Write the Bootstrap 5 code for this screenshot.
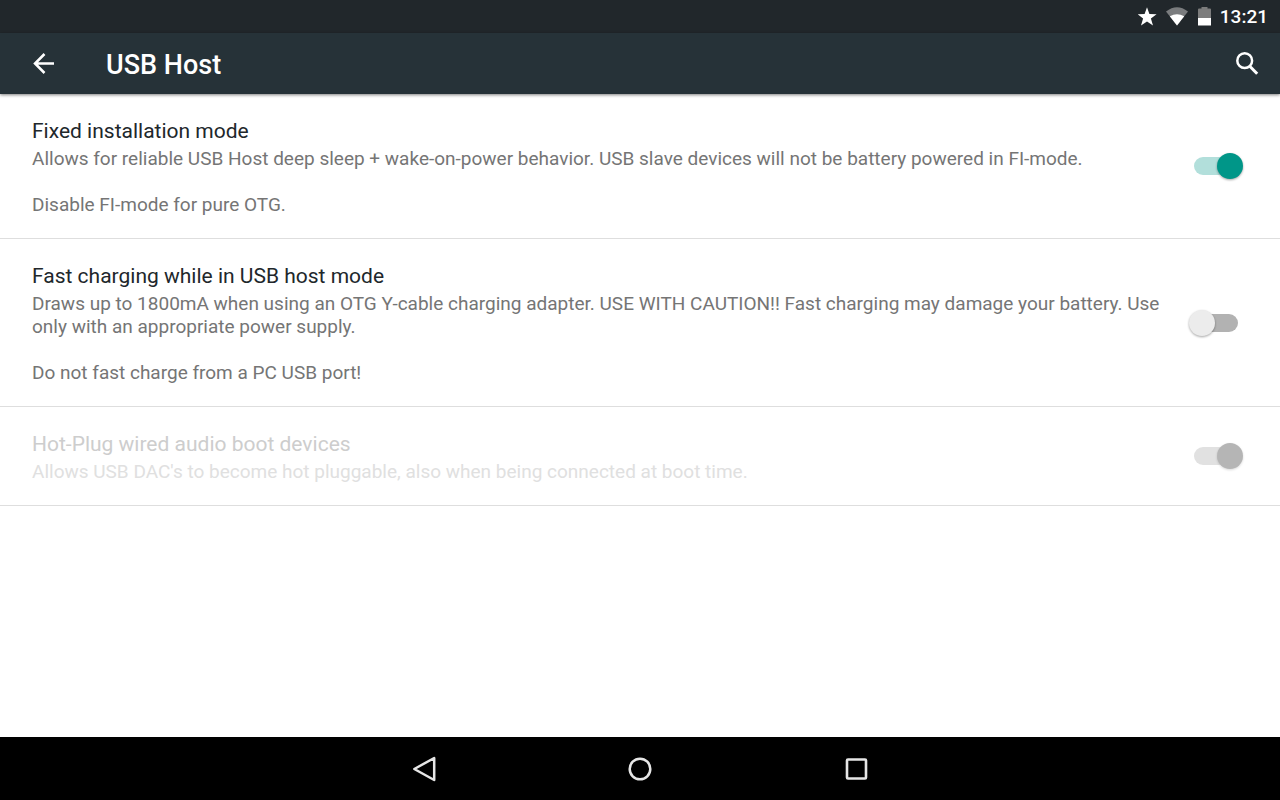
<!DOCTYPE html>
<html lang="en">
<head>
<meta charset="utf-8">
<meta name="viewport" content="width=device-width, initial-scale=1">
<title>USB Host</title>
<link href="https://cdn.jsdelivr.net/npm/bootstrap@5.3.0/dist/css/bootstrap.min.css" rel="stylesheet">
<style>
  body { font-family: Roboto, "Liberation Sans", sans-serif; background: #fff; color: #21272b; }
  svg { display: block; }
  .status-strip { height: 33px; padding-right: 12px; background: #21272b; color: #fff; font-size: 19px; line-height: 33px; font-weight: 500; }
  .app-bar { height: 61px; padding: 0 16px 0 26px; background: #263238; color: #fff; box-shadow: 0 1px 3px rgba(0,0,0,.5); position: relative; }
  .app-title { margin: 2px 0 0 46px; font-size: 27px; line-height: 32px; font-weight: 500; }
  .icon-btn { padding: 0; border: 0; color: inherit; }
  .pref { padding: 22px 36px 22px 32px; border-bottom: 1px solid #dedede; gap: 24px; }
  .pref-title { font-size: 21px; line-height: 30px; font-weight: 400; margin: 0 0 1px; display: block; }
  .pref-text { font-size: 19px; line-height: 23px; color: #757575; margin: 0; }
  .pref-text + .pref-text { margin-top: 23px; }
  .pref-off .pref-title { color: #cdcdcd; }
  .pref-off .pref-text { color: #e0e0e0; }
  .toggle { appearance: none; position: relative; width: 56px; height: 28px; margin: 0; flex: none; }
  .toggle::before { content: ""; position: absolute; inset: 5px 6px; border-radius: 9px; background: #b2b2b2; }
  .toggle::after { content: ""; position: absolute; left: 0; top: 0; width: 28px; height: 28px; border: 1px solid transparent; border-radius: 50%; background: #ececec padding-box; filter: drop-shadow(0 1px 1px rgba(0,0,0,.35)); }
  .toggle:checked::before { background: #b2dfdb; }
  .toggle:checked::after { left: auto; right: 0; background-color: #009688; }
  .toggle:disabled::before { background: #e1e1e1; }
  .toggle:disabled::after { background-color: #b5b5b5; filter: drop-shadow(0 1px 1px rgba(0,0,0,.15)); }
  .nav-strip { height: 63px; background: #000; color: #e6e6e6; }
  .nav-key { width: 216px; }
</style>
</head>
<body class="d-flex flex-column min-vh-100">
<div class="status-strip d-flex align-items-center justify-content-end">
  <svg width="20" height="20" viewBox="0 0 20 20" fill="#fff" class="me-2" aria-hidden="true"><path d="M9 .3l2.400 6.700 7.200.2-5.700 4.300 2.100 7-6-4.100-6 4.100 2.100-7L-.4 7.200l7-.2z"/></svg>
  <svg width="24" height="20" viewBox="0 0 24 20" class="me-2" aria-hidden="true"><path d="M0 4.500Q11-4 22 4.500L11 18.500z" fill="#7a7c7e"/><path d="M3.800 9.300Q11 5 18.200 9.300L11 18.500z" fill="#fff"/></svg>
  <svg width="14" height="20" viewBox="0 0 14 20" class="me-2" aria-hidden="true"><path d="M0 2.500Q0 1.500 1 1.500H3.500V0h6v1.500H12q1 0 1 1V12H0z" fill="#7c7c7c"/><path d="M0 11h13v7.500H0z" fill="#fff"/></svg>
  <span>13:21</span>
</div>
<header class="app-bar d-flex align-items-center">
  <button type="button" class="btn icon-btn" aria-label="Back"><svg width="34" height="34" viewBox="0 0 34 34" fill="none" stroke="#fff" stroke-width="2.500"><path d="M28 16.500H9M18.500 7L9 16.500l9.500 9.500"/></svg></button>
  <h1 class="app-title">USB Host</h1>
  <button type="button" class="btn icon-btn ms-auto" aria-label="Search"><svg width="34" height="34" viewBox="0 0 34 34" fill="none" stroke="#fff" stroke-width="2.500"><circle cx="14.700" cy="13.700" r="7.400"/><path d="M19.500 19l7.700 7.700" stroke-width="3"/></svg></button>
</header>
<main class="flex-grow-1">
  <section class="pref d-flex align-items-center">
    <div class="flex-grow-1">
      <label class="pref-title" for="fixed">Fixed installation mode</label>
      <p class="pref-text">Allows for reliable USB Host deep sleep + wake-on-power behavior. USB slave devices will not be battery powered in FI-mode.</p>
      <p class="pref-text">Disable FI-mode for pure OTG.</p>
    </div>
    <input class="toggle" type="checkbox" role="switch" id="fixed" checked>
  </section>
  <section class="pref d-flex align-items-center">
    <div class="flex-grow-1">
      <label class="pref-title" for="fast">Fast charging while in USB host mode</label>
      <p class="pref-text">Draws up to 1800mA when using an OTG Y-cable charging adapter. USE WITH CAUTION!! Fast charging may damage your battery. Use only with an appropriate power supply.</p>
      <p class="pref-text">Do not fast charge from a PC USB port!</p>
    </div>
    <input class="toggle" type="checkbox" role="switch" id="fast">
  </section>
  <section class="pref pref-off d-flex align-items-center">
    <div class="flex-grow-1">
      <label class="pref-title" for="hotplug">Hot-Plug wired audio boot devices</label>
      <p class="pref-text">Allows USB DAC's to become hot pluggable, also when being connected at boot time.</p>
    </div>
    <input class="toggle" type="checkbox" role="switch" id="hotplug" checked disabled>
  </section>
</main>
<nav class="nav-strip d-flex justify-content-center align-items-stretch" aria-label="System">
  <button type="button" class="btn icon-btn nav-key d-flex align-items-center justify-content-center" aria-label="Back"><svg width="28" height="28" viewBox="0 0 28 28" fill="none" stroke="currentColor" stroke-width="2.500" stroke-linejoin="round"><path d="M24.200 3v22L4.300 14z"/></svg></button>
  <button type="button" class="btn icon-btn nav-key d-flex align-items-center justify-content-center" aria-label="Home"><svg width="28" height="28" viewBox="0 0 28 28" fill="none" stroke="currentColor" stroke-width="2.500"><circle cx="14" cy="14" r="10.300"/></svg></button>
  <button type="button" class="btn icon-btn nav-key d-flex align-items-center justify-content-center" aria-label="Recent apps"><svg width="28" height="28" viewBox="0 0 28 28" fill="none" stroke="currentColor" stroke-width="2.600"><rect x="5" y="4.500" width="19" height="19" rx="1"/></svg></button>
</nav>
<script src="https://cdn.jsdelivr.net/npm/bootstrap@5.3.0/dist/js/bootstrap.bundle.min.js"></script>
</body>
</html>
